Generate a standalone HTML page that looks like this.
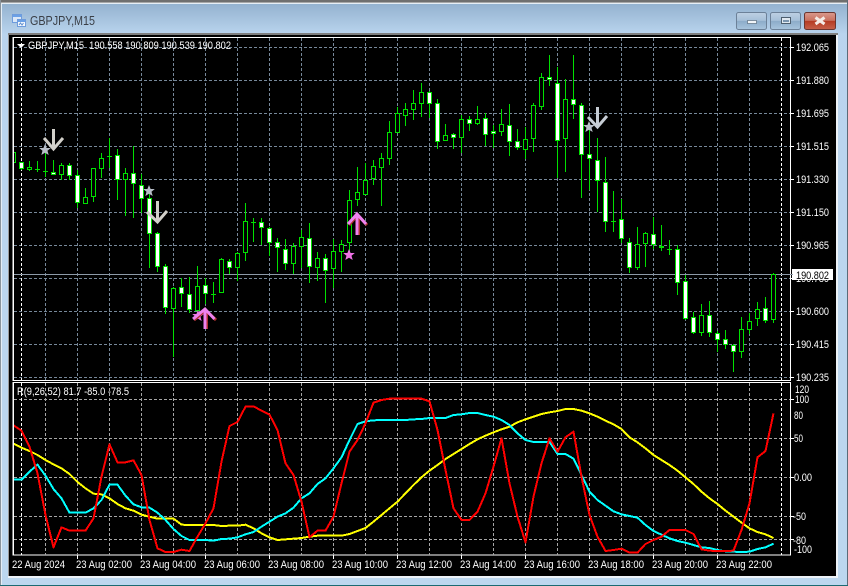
<!DOCTYPE html>
<html><head><meta charset="utf-8"><title>GBPJPY,M15</title>
<style>
html,body{margin:0;padding:0;background:#b9d3ec;width:848px;height:586px;overflow:hidden}
svg{display:block;position:absolute;left:0;top:0}
text{font-family:"Liberation Sans",sans-serif;font-size:11px;fill:#fff}
</style></head><body>
<svg width="848" height="586" viewBox="0 0 848 586" xmlns="http://www.w3.org/2000/svg">
<defs>
<linearGradient id="tb" x1="0" y1="0" x2="0" y2="1"><stop offset="0" stop-color="#93b1ce"/><stop offset="1" stop-color="#b9d4ee"/></linearGradient>
<linearGradient id="lf" x1="0" y1="0" x2="0" y2="1"><stop offset="0" stop-color="#b9d4ee"/><stop offset=".6" stop-color="#bcd6ee"/><stop offset="1" stop-color="#bcd7ef"/></linearGradient>
<linearGradient id="btn" x1="0" y1="0" x2="0" y2="1"><stop offset="0" stop-color="#bdd0e3"/><stop offset=".48" stop-color="#a6bfd8"/><stop offset=".5" stop-color="#8cacc9"/><stop offset="1" stop-color="#a9c5de"/></linearGradient>
<linearGradient id="cl" x1="0" y1="0" x2="0" y2="1"><stop offset="0" stop-color="#d99a8d"/><stop offset=".48" stop-color="#c9705e"/><stop offset=".5" stop-color="#b43a22"/><stop offset="1" stop-color="#c7614a"/></linearGradient>
<clipPath id="main"><rect x="14" y="38" width="776" height="342"/></clipPath>
<clipPath id="ind"><rect x="14" y="383" width="776" height="172"/></clipPath>
<polygon id="st" points="0,-6 1.600,-2 5.800,-2 2.500,.8 3.700,5 0,2.700 -3.700,5 -2.500,.8 -5.800,-2 -1.600,-2"/>
</defs>

<!-- window chrome -->
<rect x="0" y="0" width="848" height="586" fill="url(#lf)"/>
<rect x="0" y="3" width="848" height="31" fill="url(#tb)"/>
<rect x="0" y="0" width="848" height="2" fill="#6f6f6f"/>
<rect x="0" y="2" width="848" height="1" fill="#a8a8a8"/>
<rect x="0" y="3" width="848" height="1" fill="#e6eef5"/>
<rect x="0" y="0" width="1" height="586" fill="#8a949c"/>
<rect x="847" y="0" width="1" height="586" fill="#5b6b78"/>
<rect x="1" y="3" width="1" height="583" fill="#e4edf5"/>
<rect x="0" y="585" width="848" height="1" fill="#1b6a72"/>
<rect x="8" y="33" width="830" height="2" fill="#7e7e7e"/>
<rect x="8" y="35" width="1" height="543" fill="#9a9a9a"/>
<rect x="9" y="35" width="827" height="541" fill="#000"/>
<rect x="836" y="35" width="2" height="543" fill="#eef3f8"/>
<rect x="8" y="576" width="830" height="2" fill="#eef3f8"/>

<!-- title icon -->
<rect x="12.500" y="14.500" width="9" height="8" fill="#dbe8f8" stroke="#6e9cdc"/>
<rect x="17.500" y="19.500" width="8" height="7" fill="#f4f8fd" stroke="#6e9cdc"/>
<rect x="13" y="15" width="8" height="2" fill="#6aa0e6"/>
<rect x="18" y="20" width="7" height="2" fill="#6aa0e6"/>
<path d="M19 25l1.500-2 1.500 2 1.500-2" fill="none" stroke="#5f8fd0"/>
<text x="30" y="25" textLength="65" lengthAdjust="spacingAndGlyphs" style="font-size:12.500px;fill:#3a3f47">GBPJPY,M15</text>

<!-- window buttons -->
<rect x="736.500" y="12.500" width="30" height="17" rx="2" fill="url(#btn)" stroke="#6c8198"/>
<rect x="747.500" y="20.500" width="9" height="3" fill="#f2f5f8" stroke="#5d6f80" stroke-width=".7"/>
<rect x="770.500" y="12.500" width="30" height="17" rx="2" fill="url(#btn)" stroke="#6c8198"/>
<rect x="781.500" y="17.500" width="9" height="6" fill="#dfe8f0" stroke="#4d5e6e"/>
<rect x="783" y="20" width="6" height="2" fill="#7a95af"/>
<rect x="804.500" y="12.500" width="31" height="17" rx="2" fill="url(#cl)" stroke="#6b3630"/>
<path d="M815.500 17.500l9 6.500M824.500 17.500l-9 6.500" stroke="#f4ece6" stroke-width="3" fill="none"/>

<!-- frames -->
<rect x="13" y="37.500" width="777.500" height="343" fill="none" stroke="#fff"/>
<rect x="13" y="382.500" width="777.500" height="172.500" fill="none" stroke="#fff"/>
<path d="M13.500 37V381M13.500 382V555" stroke="#fff"/>

<!-- main chart grid -->
<g clip-path="url(#main)" shape-rendering="crispEdges">
<path d="M14 47.500H790M14 80.500H790M14 113.500H790M14 146.500H790M14 179.500H790M14 212.500H790M14 245.500H790M14 278.500H790M14 311.500H790M14 344.500H790M14 377.500H790" stroke="#778899" stroke-dasharray="3 2" fill="none"/>
<path d="M45.500 38V380M77.500 38V380M109.500 38V380M141.500 38V380M173.500 38V380M205.500 38V380M237.500 38V380M269.500 38V380M301.500 38V380M333.500 38V380M365.500 38V380M397.500 38V380M429.500 38V380M461.500 38V380M493.500 38V380M525.500 38V380M557.500 38V380M589.500 38V380M621.500 38V380M653.500 38V380M685.500 38V380M717.500 38V380M749.500 38V380" stroke="#778899" stroke-dasharray="3 2" fill="none"/>
<path d="M21.500 38V380M781.500 38V380" stroke="#fff" stroke-dasharray="3 2" fill="none"/>
<path d="M14 274.500H790" stroke="#8d9aa8"/>

<!-- wicks -->
<path fill="none" stroke="#00e000" d="M13.500 145V163M21.500 162V170M29.500 161V171M37.500 161V172M45.500 150V177M53.500 160V175M61.500 163V180M69.500 163V180M77.500 170V208M85.500 188V204M93.500 168V202M101.500 153V178M109.500 138V168M117.500 149V200M125.500 168V216M133.500 146V218M141.500 174V213M149.500 190V268M157.500 232V272M165.500 264V314M173.500 287V357M181.500 278V307M189.500 277V313M197.500 266V312M205.500 278V304M213.500 282V303M221.500 258V293M229.500 259V274M237.500 252V281M245.500 203V261M253.500 218V242M261.500 218V245M269.500 227V256M277.500 238V272M285.500 239V270M293.500 243V274M301.500 230V268M309.500 223V283M317.500 252V281M325.500 254V303M333.500 239V288M341.500 240V272M349.500 190V253M357.500 167V206M365.500 163V195M373.500 160V185M381.500 153V206M389.500 121V165M397.500 107V133M405.500 103V126M413.500 90V120M421.500 83V117M429.500 91V118M437.500 99V149M445.500 124V141M453.500 133V149M461.500 115V153M469.500 116V131M477.500 106V125M485.500 113V146M493.500 125V148M501.500 109V136M509.500 104V156M517.500 129V150M525.500 127V159M533.500 103V152M541.500 73V110M549.500 55V86M557.500 67V178M565.500 79V172M573.500 55V119M581.500 103V198M589.500 130V190M597.500 138V212M605.500 157V232M613.500 191V232M621.500 199V243M629.500 238V273M637.500 227V270M645.500 232V267M653.500 217V249M661.500 225V251M669.500 240V255M677.500 245V295M685.500 275V320M693.500 312V334M701.500 304V336M709.500 301V337M717.500 331V352M725.500 330V349M733.500 344V372M741.500 317V358M749.500 313V334M757.500 302V326M765.500 297V323M773.500 273V323"/>
<!-- doji -->
<path fill="none" stroke="#00e000" d="M35 169.500h5M43 171.500h5M107 156.500h5M211 294.500h5M251 222.500h5M611 221.500h5M667 249.500h5"/>
<!-- black bodies -->
<path fill="#000" stroke="#00e000" d="M11.500 152.500h4v10h-4zM27.500 167.500h4v2h-4zM59.500 165.500h4v9h-4zM83.500 197.500h4v6h-4zM91.500 168.500h4v28h-4zM99.500 158.500h4v10h-4zM123.500 173.500h4v6h-4zM171.500 288.500h4v20h-4zM195.500 286.500h4v24h-4zM219.500 259.500h4v33h-4zM235.500 253.500h4v14h-4zM243.500 221.500h4v31h-4zM291.500 246.500h4v17h-4zM299.500 237.500h4v9h-4zM315.500 258.500h4v9h-4zM331.500 251.500h4v17h-4zM339.500 244.500h4v7h-4zM347.500 200.500h4v42h-4zM355.500 192.500h4v7h-4zM363.500 180.500h4v14h-4zM371.500 166.500h4v12h-4zM379.500 158.500h4v9h-4zM387.500 132.500h4v26h-4zM395.500 113.500h4v19h-4zM403.500 109.500h4v6h-4zM411.500 103.500h4v6h-4zM419.500 92.500h4v11h-4zM443.500 135.500h4v5h-4zM459.500 119.500h4v18h-4zM475.500 119.500h4v4h-4zM499.500 124.500h4v7h-4zM523.500 139.500h4v10h-4zM531.500 105.500h4v33h-4zM539.500 77.500h4v29h-4zM563.500 99.500h4v39h-4zM635.500 244.500h4v23h-4zM643.500 233.500h4v10h-4zM699.500 315.500h4v17h-4zM739.500 329.500h4v22h-4zM747.500 321.500h4v8h-4zM755.500 309.500h4v9h-4zM771.500 274.500h4v45h-4z"/>
<!-- white bodies -->
<path fill="#fff" stroke="#00e000" d="M19.500 162.500h4v6h-4zM51.500 172.500h4v2h-4zM67.500 165.500h4v10h-4zM75.500 175.500h4v27h-4zM115.500 155.500h4v24h-4zM131.500 173.500h4v10h-4zM139.500 185.500h4v13h-4zM147.500 198.500h4v35h-4zM155.500 233.500h4v33h-4zM163.500 266.500h4v41h-4zM179.500 287.500h4v6h-4zM187.500 294.500h4v15h-4zM203.500 285.500h4v8h-4zM227.500 261.500h4v6h-4zM259.500 222.500h4v5h-4zM267.500 228.500h4v14h-4zM275.500 242.500h4v5h-4zM283.500 249.500h4v14h-4zM307.500 238.500h4v28h-4zM323.500 258.500h4v12h-4zM427.500 92.500h4v11h-4zM435.500 103.500h4v38h-4zM451.500 134.500h4v3h-4zM467.500 119.500h4v4h-4zM483.500 118.500h4v16h-4zM491.500 131.500h4v2h-4zM507.500 125.500h4v16h-4zM515.500 141.500h4v6h-4zM547.500 77.500h4v2h-4zM555.500 83.500h4v57h-4zM571.500 99.500h4v5h-4zM579.500 105.500h4v49h-4zM587.500 154.500h4v4h-4zM595.500 160.500h4v20h-4zM603.500 182.500h4v39h-4zM619.500 219.500h4v19h-4zM627.500 242.500h4v25h-4zM651.500 234.500h4v10h-4zM659.500 246.500h4v1h-4zM675.500 249.500h4v33h-4zM683.500 281.500h4v37h-4zM691.500 317.500h4v15h-4zM707.500 315.500h4v17h-4zM715.500 333.500h4v6h-4zM723.500 339.500h4v5h-4zM731.500 345.500h4v6h-4zM763.500 308.500h4v12h-4z"/>
</g>

<!-- stars -->
<g fill="#b8bec8">
<use href="#st" x="45" y="150"/>
<use href="#st" x="149" y="191"/>
<use href="#st" x="589" y="127"/>
</g>
<g fill="#ee70e6">
<use href="#st" x="198" y="316"/>
<use href="#st" x="349" y="255"/>
</g>

<!-- arrows -->
<g fill="none" stroke-width="3">
<path d="M53.500 129V149M44 138L53.500 149L63 138" stroke="#d2d0ca"/>
<path d="M157.500 201V222M147 212L157.500 222L167 211" stroke="#d2d0ca"/>
<path d="M597.500 107V128M588 117L597.500 127L607 116" stroke="#c6ccd4"/>
<path d="M206.500 310V329M194 320L205.500 310L216 320" stroke="#b03030"/>
<path d="M205 309V329M193 319L205 309L214.500 319" stroke="#ee82ee"/>
<path d="M358.500 215V235M349 225L357.500 215L367 225" stroke="#b03030"/>
<path d="M357 214V235M348 224L357 214L366 224" stroke="#ee82ee"/>
</g>

<!-- header text -->
<path d="M17 44h8l-4 4z" fill="#fff"/>
<text x="28" y="49" textLength="203" lengthAdjust="spacingAndGlyphs" xml:space="preserve">GBPJPY,M15  190.558 190.809 190.539 190.802</text>

<!-- indicator grid -->
<g clip-path="url(#ind)" shape-rendering="crispEdges">
<path d="M14 399.500H790M14 438.500H790M14 477.500H790M14 516.500H790M14 539.500H790" stroke="#a6a6a6" stroke-dasharray="3 2" fill="none"/>
<path d="M45.500 383V555M77.500 383V555M109.500 383V555M141.500 383V555M173.500 383V555M205.500 383V555M237.500 383V555M269.500 383V555M301.500 383V555M333.500 383V555M365.500 383V555M397.500 383V555M429.500 383V555M461.500 383V555M493.500 383V555M525.500 383V555M557.500 383V555M589.500 383V555M621.500 383V555M653.500 383V555M685.500 383V555M717.500 383V555M749.500 383V555" stroke="#a6a6a6" stroke-dasharray="3 2" fill="none"/>
<path d="M21.500 383V555M781.500 383V555" stroke="#fff" stroke-dasharray="3 2" fill="none"/>
<g transform="translate(13.5,380) scale(8,0.33333)" fill="none" stroke-width="2" stroke-linejoin="round">
<polyline vector-effect="non-scaling-stroke" stroke="#ffff00" points="0,191 1,203 2,213 3,225 4,240 5,253 6,265 7,282 8,306 9,325 10,341 11,343 12,355 13,372 14,385 15,392 16,404 17,410 18,416 19,415 20,416 21,434 22,435 23,435 24,435 25,435 26,438 27,437 28,437 29,434 30,445 31,460 32,472 33,480 34,478 35,476 36,474 37,470 38,467 39,467 40,467 41,467 42,462 43,453 44,444 45,425 46,405 47,385 48,365 49,340 50,315 51,292 52,272 53,255 54,237 55,222 56,207 57,192 58,178 59,167 60,157 61,148 62,140 63,127 64,118 65,110 66,102 67,97 68,93 69,87 70,87 71,92 72,100 73,110 74,122 75,133 76,147 77,172 78,187 79,205 80,225 81,240 82,255 83,272 84,292 85,312 86,335 87,355 88,372 89,392 90,410 91,428 92,445 93,456 94,463 95,474"/>
<polyline vector-effect="non-scaling-stroke" stroke="#00ffff" points="0,299 1,299 2,275 3,254 4,287 5,327 6,355 7,398 8,398 9,398 10,385 11,360 12,314 13,314 14,347 15,373 16,382 17,383 18,398 19,420 20,447 21,468 22,480 23,480 24,480 25,482 26,477 27,476 28,472 29,463 30,456 31,440 32,425 33,410 34,400 35,383 36,355 37,340 38,312 39,295 40,265 41,232 42,180 43,132 44,124 45,121 46,120 47,120 48,120 49,120 50,118 51,117 52,114 53,114 54,114 55,105 56,103 57,99 58,99 59,105 60,110 61,120 62,135 63,160 64,180 65,186 66,186 67,186 68,222 69,222 70,236 71,285 72,335 73,360 74,377 75,394 76,403 77,408 78,413 79,435 80,453 81,464 82,475 83,483 84,488 85,495 86,502 87,504 88,510 89,514 90,515 91,516 92,515 93,507 94,502 95,491"/>
<polyline vector-effect="non-scaling-stroke" stroke="#ff0000" points="0,136 1,152 2,200 3,280 4,405 5,502 6,442 7,452 8,452 9,452 10,415 11,290 12,193 13,247 14,247 15,241 16,285 17,420 18,505 19,516 20,516 21,509 22,513 23,470 24,430 25,385 26,245 27,138 28,126 29,80 30,79 31,92 32,104 33,150 34,250 35,285 36,365 37,472 38,452 39,452 40,410 41,310 42,215 43,180 44,130 45,68 46,60 47,56 48,56 49,56 50,56 51,56 52,64 53,150 54,270 55,385 56,420 57,420 58,395 59,340 60,260 61,175 62,310 63,410 64,487 65,350 66,250 67,175 68,215 69,172 70,155 71,290 72,405 73,470 74,513 75,510 76,506 77,518 78,518 79,492 80,480 81,470 82,450 83,450 84,450 85,462 86,508 87,512 88,513 89,513 90,512 91,450 92,370 93,232 94,213 95,100"/>
</g>
</g>
<text x="17" y="395" textLength="112" lengthAdjust="spacingAndGlyphs">R(9,26,52) 81.7 -85.0 -78.5</text>

<!-- axis ticks -->
<path d="M791 47.500h3M791 80.500h3M791 113.500h3M791 146.500h3M791 179.500h3M791 212.500h3M791 245.500h3M791 278.500h3M791 311.500h3M791 344.500h3M791 377.500h3M791 399.500h3M791 438.500h3M791 477.500h3M791 516.500h3M791 539.500h3" stroke="#fff" shape-rendering="crispEdges"/>
<path d="M77.500 555v4M141.500 555v4M205.500 555v4M269.500 555v4M333.500 555v4M397.500 555v4M461.500 555v4M525.500 555v4M589.500 555v4M653.500 555v4M717.500 555v4" stroke="#fff" shape-rendering="crispEdges"/>

<!-- price labels -->
<g>
<text x="796" y="51" textLength="33" lengthAdjust="spacingAndGlyphs">192.065</text>
<text x="796" y="84" textLength="33" lengthAdjust="spacingAndGlyphs">191.880</text>
<text x="796" y="117" textLength="33" lengthAdjust="spacingAndGlyphs">191.695</text>
<text x="796" y="150" textLength="33" lengthAdjust="spacingAndGlyphs">191.515</text>
<text x="796" y="183" textLength="33" lengthAdjust="spacingAndGlyphs">191.330</text>
<text x="796" y="216" textLength="33" lengthAdjust="spacingAndGlyphs">191.150</text>
<text x="796" y="249" textLength="33" lengthAdjust="spacingAndGlyphs">190.965</text>
<text x="796" y="282" textLength="33" lengthAdjust="spacingAndGlyphs">190.780</text>
<text x="796" y="315" textLength="33" lengthAdjust="spacingAndGlyphs">190.600</text>
<text x="796" y="348" textLength="33" lengthAdjust="spacingAndGlyphs">190.415</text>
<text x="796" y="381" textLength="33" lengthAdjust="spacingAndGlyphs">190.235</text>
</g>
<!-- bid label -->
<rect x="792" y="269" width="41" height="11" fill="#fff"/>
<text x="796" y="279" textLength="33" lengthAdjust="spacingAndGlyphs" style="fill:#000">190.802</text>
<path d="M790 274.500h3" stroke="#8d9aa8"/>

<!-- indicator labels -->
<g>
<text x="795" y="393" textLength="14" lengthAdjust="spacingAndGlyphs">120</text>
<text x="795" y="403" textLength="14" lengthAdjust="spacingAndGlyphs">100</text>
<text x="794" y="419" textLength="9" lengthAdjust="spacingAndGlyphs">80</text>
<text x="794" y="442" textLength="9" lengthAdjust="spacingAndGlyphs">50</text>
<text x="794" y="481" textLength="18" lengthAdjust="spacingAndGlyphs">0.00</text>
<text x="793" y="520" textLength="13" lengthAdjust="spacingAndGlyphs">-50</text>
<text x="793" y="544" textLength="13" lengthAdjust="spacingAndGlyphs">-80</text>
<text x="794" y="553" textLength="18" lengthAdjust="spacingAndGlyphs">-100</text>
</g>

<!-- time labels -->
<g>
<text x="12" y="568" textLength="53" lengthAdjust="spacingAndGlyphs">22 Aug 2024</text>
<text x="76" y="568" textLength="56" lengthAdjust="spacingAndGlyphs">23 Aug 02:00</text>
<text x="140" y="568" textLength="56" lengthAdjust="spacingAndGlyphs">23 Aug 04:00</text>
<text x="204" y="568" textLength="56" lengthAdjust="spacingAndGlyphs">23 Aug 06:00</text>
<text x="268" y="568" textLength="56" lengthAdjust="spacingAndGlyphs">23 Aug 08:00</text>
<text x="332" y="568" textLength="56" lengthAdjust="spacingAndGlyphs">23 Aug 10:00</text>
<text x="396" y="568" textLength="56" lengthAdjust="spacingAndGlyphs">23 Aug 12:00</text>
<text x="460" y="568" textLength="56" lengthAdjust="spacingAndGlyphs">23 Aug 14:00</text>
<text x="524" y="568" textLength="56" lengthAdjust="spacingAndGlyphs">23 Aug 16:00</text>
<text x="588" y="568" textLength="56" lengthAdjust="spacingAndGlyphs">23 Aug 18:00</text>
<text x="652" y="568" textLength="56" lengthAdjust="spacingAndGlyphs">23 Aug 20:00</text>
<text x="716" y="568" textLength="56" lengthAdjust="spacingAndGlyphs">23 Aug 22:00</text>
</g>
</svg>
</body></html>
